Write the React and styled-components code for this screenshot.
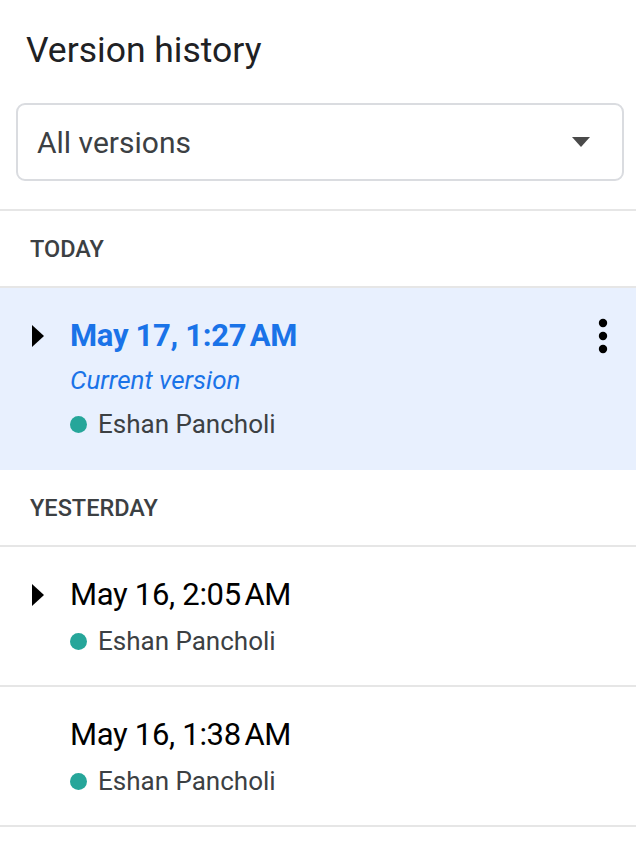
import styled, { createGlobalStyle } from "styled-components";

const GlobalStyle = createGlobalStyle`
  html, body {
    margin: 0;
    padding: 0;
    background: #ffffff;
  }
  body {
    font-family: Roboto, "Liberation Sans", Arial, sans-serif;
    -webkit-font-smoothing: antialiased;
  }
`;

const Panel = styled.div`
  width: 636px;
  background: #ffffff;
`;

const Header = styled.header`
  padding: 30px 12px 28px 16px;
  border-bottom: 2px solid #e6e6e6;
`;

const Title = styled.h1`
  margin: 0 0 33px 10px;
  font-size: 35.5px;
  line-height: 40px;
  font-weight: 400;
  color: #202124;
`;

const Select = styled.div`
  height: 74px;
  display: flex;
  align-items: center;
  justify-content: space-between;
  padding: 0 32px 0 19px;
  border: 2px solid #dadce0;
  border-radius: 9px;
  font-size: 30px;
  color: #3c4043;
`;

const SectionLabel = styled.div`
  height: 75px;
  display: flex;
  align-items: center;
  padding-left: 30px;
  font-size: 23.5px;
  font-weight: 500;
  color: #3c4043;
  text-transform: uppercase;
  border-bottom: 2px solid #e6e6e6;
`;

const Row = styled.div`
  display: grid;
  grid-template-columns: 70px 1fr 60px;
  padding: 25px 0 21px;
  background: ${(p) => (p.$active ? "#e8f0fe" : "#ffffff")};
  border-bottom: 2px solid ${(p) => (p.$active ? "#e8f0fe" : "#e6e6e6")};
`;

const Toggle = styled.div`
  height: 46px;
  display: flex;
  align-items: center;
  padding-left: 32px;
`;

const Body = styled.div`
  display: flex;
  flex-direction: column;
`;

const When = styled.div`
  font-size: 31px;
  line-height: 46px;
  font-weight: ${(p) => (p.$active ? 700 : 400)};
  color: ${(p) => (p.$active ? "#1a73e8" : "#000000")};
  letter-spacing: -0.3px;
`;

const Current = styled.div`
  font-size: 26px;
  line-height: 42px;
  font-style: italic;
  color: #1a73e8;
`;

const Author = styled.div`
  display: flex;
  align-items: center;
  gap: 11px;
  font-size: 26px;
  line-height: 46px;
  color: #3c4043;
`;

const Dot = styled.span`
  width: 17px;
  height: 17px;
  border-radius: 50%;
  background: #26a69a;
`;

const Menu = styled.div`
  height: 46px;
  display: flex;
  align-items: center;
  justify-content: center;
  padding-right: 6px;
`;

const Caret = () => (
  <svg width="12" height="22" viewBox="0 0 12 22">
    <polygon points="0,0 12,11 0,22" fill="#000" />
  </svg>
);

const DropArrow = () => (
  <svg width="18" height="10" viewBox="0 0 18 10">
    <polygon points="0,0 18,0 9,10" fill="#4a4a4a" />
  </svg>
);

const Kebab = () => (
  <svg width="10" height="36" viewBox="0 0 10 36">
    <circle cx="5" cy="5" r="4.2" fill="#000" />
    <circle cx="5" cy="18" r="4.2" fill="#000" />
    <circle cx="5" cy="31" r="4.2" fill="#000" />
  </svg>
);

const sections = [
  {
    label: "Today",
    items: [
      { when: "May 17, 1:27\u202FAM", author: "Eshan Pancholi", active: true, expandable: true },
    ],
  },
  {
    label: "Yesterday",
    items: [
      { when: "May 16, 2:05\u202FAM", author: "Eshan Pancholi", expandable: true },
      { when: "May 16, 1:38\u202FAM", author: "Eshan Pancholi" },
    ],
  },
];

function VersionRow({ item }) {
  return (
    <Row $active={item.active}>
      <Toggle>{item.expandable && <Caret />}</Toggle>
      <Body>
        <When $active={item.active}>{item.when}</When>
        {item.active && <Current>Current version</Current>}
        <Author>
          <Dot />
          {item.author}
        </Author>
      </Body>
      <Menu>{item.active && <Kebab />}</Menu>
    </Row>
  );
}

export default function App() {
  return (
    <>
      <GlobalStyle />
      <Panel>
        <Header>
          <Title>Version history</Title>
          <Select>
            All versions
            <DropArrow />
          </Select>
        </Header>
        {sections.map((s) => (
          <section key={s.label}>
            <SectionLabel>{s.label}</SectionLabel>
            {s.items.map((it) => (
              <VersionRow key={it.when} item={it} />
            ))}
          </section>
        ))}
      </Panel>
    </>
  );
}
